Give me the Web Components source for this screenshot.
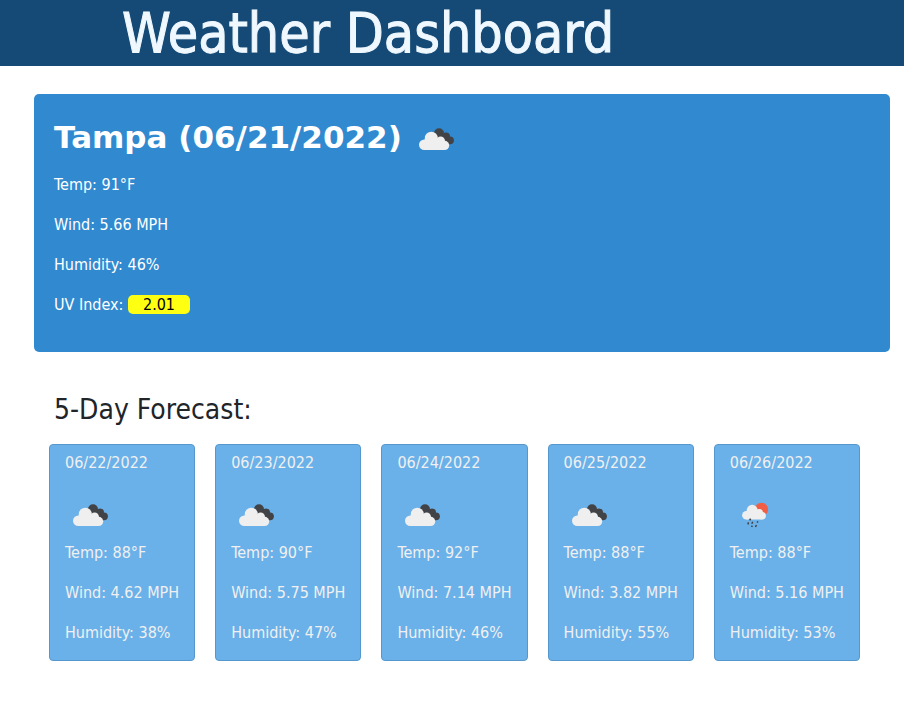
<!DOCTYPE html>
<html lang="en">
<head>
<meta charset="utf-8">
<title>Weather Dashboard</title>
<style>
body { margin: 0; background: #fff; color: #212529; font: 16px/24px Tahoma, "DejaVu Sans Condensed", "DejaVu Sans", sans-serif; }
</style>
</head>
<body>
<weather-app></weather-app>
<script>
const define = (name, html, setup) => {
  const template = document.createElement('template');
  template.innerHTML = html;
  customElements.define(name, class extends HTMLElement {
    constructor() {
      super();
      this.attachShadow({ mode: 'open' }).append(template.content.cloneNode(true));
    }
    connectedCallback() { if (setup) setup(this); }
  });
};

define('weather-icon', `
<style>
:host { display: inline-block; width: 50px; height: 50px; flex: none; }
svg { display: block; }
svg[hidden] { display: none; }
</style>
<svg class="clouds" width="50" height="50" viewBox="0 0 50 50" role="img" aria-label="Broken clouds">
  <g fill="#424346"><circle cx="28" cy="19.2" r="5"/><circle cx="35" cy="22.4" r="4"/><circle cx="39" cy="26.3" r="3.9"/><path d="M28 20h7l4 10-4 .2-7-5Z"/></g>
  <g fill="#efefef"><circle cx="13.3" cy="30.7" r="5.3"/><circle cx="20.3" cy="24.2" r="6.5"/><circle cx="29.6" cy="26.8" r="4.4"/><circle cx="33.6" cy="31.4" r="4.6"/><path d="M13.3 36V25.5L30 25l3.6 6v5Z"/></g>
</svg>
<svg class="rain" width="50" height="50" viewBox="0 0 50 50" role="img" aria-label="Rain showers">
  <circle cx="31.4" cy="19.4" r="6.7" fill="#f05f45"/>
  <g fill="#efefef"><circle cx="16.4" cy="25.2" r="4.3"/><circle cx="22.2" cy="20.3" r="5.5"/><circle cx="29.3" cy="22.5" r="3.6"/><circle cx="32.2" cy="25.8" r="3.7"/><path d="M16.4 29.5V21L29 22l3.2 4v3.5Z"/></g>
  <path stroke="#424346" stroke-width="1.5" fill="none" d="m20.6 28.6-.9 1.8m-1.1 2-.8 2m4.9-2.6-.9 2m.5 1.8-.7 1.4m6.3-5.6-.8 1.3m-.7 2.3-.9 2"/>
</svg>`, el => {
  el.shadowRoot.querySelectorAll('svg').forEach(s => s.toggleAttribute('hidden', !s.classList.contains(el.getAttribute('kind'))));
});

define('page-header', `
<style>
:host { display: block; background: #144a75; color: #f0f8ff; padding: 1px 122px 0; }
h1 { margin: 0; font-size: 55px; line-height: 65px; font-weight: 400; -webkit-text-stroke: 1px currentColor; }
</style>
<h1><slot></slot></h1>`);

define('uv-badge', `
<style>
:host { display: inline-block; padding: 0 15px; border-radius: 5px; background: #ff1; color: #000; line-height: 19px; }
</style>
<slot></slot>`);

define('current-weather', `
<style>
:host { display: block; margin: 28px 14px 0 34px; padding: 20px 20px 19px; border-radius: 5px; background: #318ad0; color: #fff; }
h2 { display: flex; align-items: flex-start; gap: 9px; margin: 0 0 9px; font: 700 31px/46px "DejaVu Sans", Verdana, sans-serif; }
::slotted(p) { margin: 0 0 16px; }
</style>
<h2><slot name="title"></slot><slot name="icon"></slot></h2>
<slot></slot>`);

define('forecast-card', `
<style>
:host { display: block; box-sizing: border-box; padding: 6px 15px 15px; border: 1px solid #5698cd; border-radius: 4px; background: #6bb1e9; color: #f0f0f0; white-space: nowrap; }
h3 { margin: 0 0 15px; font: inherit; }
weather-icon { display: block; margin-bottom: 1px; }
.readings { display: grid; gap: 16px; }
::slotted(p) { margin: 0; }
</style>
<h3></h3>
<weather-icon></weather-icon>
<div class="readings"><slot></slot></div>`, el => {
  el.shadowRoot.querySelector('h3').textContent = el.getAttribute('date');
  const icon = document.createElement('weather-icon');
  icon.setAttribute('kind', el.getAttribute('kind'));
  el.shadowRoot.querySelector('weather-icon').replaceWith(icon);
});

define('forecast-list', `
<style>
:host { display: block; padding: 41px 44px 0 49px; }
h2 { margin: 0 5px 17px; font-size: 28px; line-height: 34px; font-weight: 400; }
div { display: grid; grid-template-columns: repeat(5, 1fr); gap: 20px; }
</style>
<h2>5-Day Forecast:</h2>
<div><slot></slot></div>`);

define('weather-app', `
<style>:host { display: block; } current-weather p { margin: 0 0 16px; } forecast-card p { margin: 0; }</style>
<page-header>Weather Dashboard</page-header>
<main>
  <current-weather>
    <span slot="title">Tampa (06/21/2022)</span>
    <weather-icon slot="icon" kind="clouds"></weather-icon>
    <p>Temp: 91°F</p><p>Wind: 5.66 MPH</p><p>Humidity: 46%</p><p>UV Index: <uv-badge>2.01</uv-badge></p>
  </current-weather>
  <forecast-list>
    <forecast-card date="06/22/2022" kind="clouds"><p>Temp: 88°F</p><p>Wind: 4.62 MPH</p><p>Humidity: 38%</p></forecast-card>
    <forecast-card date="06/23/2022" kind="clouds"><p>Temp: 90°F</p><p>Wind: 5.75 MPH</p><p>Humidity: 47%</p></forecast-card>
    <forecast-card date="06/24/2022" kind="clouds"><p>Temp: 92°F</p><p>Wind: 7.14 MPH</p><p>Humidity: 46%</p></forecast-card>
    <forecast-card date="06/25/2022" kind="clouds"><p>Temp: 88°F</p><p>Wind: 3.82 MPH</p><p>Humidity: 55%</p></forecast-card>
    <forecast-card date="06/26/2022" kind="rain"><p>Temp: 88°F</p><p>Wind: 5.16 MPH</p><p>Humidity: 53%</p></forecast-card>
  </forecast-list>
</main>`);
</script>
</body>
</html>
